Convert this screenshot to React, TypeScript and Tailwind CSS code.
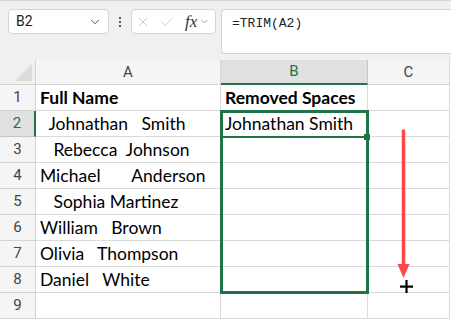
import { ChevronDown, X, Check } from "lucide-react";

const cellFont = { fontFamily: "Lato, 'Open Sans', sans-serif" };

const rows: { a: string; b: string; bold?: boolean }[] = [
  { a: "Full Name", b: "Removed Spaces", bold: true },
  { a: "  Johnathan   Smith", b: "Johnathan Smith" },
  { a: "   Rebecca  Johnson", b: "" },
  { a: "Michael       Anderson", b: "" },
  { a: "   Sophia Martinez", b: "" },
  { a: "William   Brown", b: "" },
  { a: "Olivia   Thompson", b: "" },
  { a: "Daniel   White", b: "" },
  { a: "", b: "" },
];

function FormulaBar() {
  return (
    <div className="relative h-[60px] border-t border-[#d6d6d6] bg-[#f0f0f0] font-['Roboto',sans-serif]">
      <div className="flex items-start gap-0 pt-[8px] pl-[8px]">
        <div className="flex h-[25px] w-[101px] items-center justify-between rounded-[4px] border border-[#d4d4d4] bg-white pl-[7px] pr-[6px] text-[14px] text-[#222]">
          <span>B2</span>
          <ChevronDown className="h-[14px] w-[14px] text-[#444]" strokeWidth={1.6} />
        </div>
        <div className="flex h-[25px] w-[22px] flex-col items-center justify-center gap-[2px]">
          <span className="h-[2px] w-[2px] bg-[#555]" />
          <span className="h-[2px] w-[2px] bg-[#555]" />
          <span className="h-[2px] w-[2px] bg-[#555]" />
        </div>
        <div className="flex h-[25px] w-[85px] items-center rounded-[4px] border border-[#d4d4d4] bg-white pl-[3px]">
          <X className="h-[16px] w-[16px] text-[#bdbdbd]" strokeWidth={1.2} />
          <Check className="ml-[8px] h-[16px] w-[16px] text-[#bdbdbd]" strokeWidth={1.2} />
          <span className="ml-[10px] font-['Liberation_Serif',serif] text-[17px] italic leading-none text-[#333]">
            fx
          </span>
          <ChevronDown className="ml-[2px] h-[11px] w-[11px] text-[#777]" strokeWidth={1.6} />
        </div>
        <div className="ml-[5px] h-[45px] flex-1 rounded-l-[4px] border border-r-0 border-[#d4d4d4] bg-white pl-[10px] pt-[4px] font-['Liberation_Mono',monospace] text-[13px] text-[#222]">
          =TRIM(A2)
        </div>
      </div>
    </div>
  );
}

export default function App() {
  return (
    <div className="h-[321px] w-[451px] overflow-hidden bg-white">
      <FormulaBar />
      <div className="relative">
        <div className="grid grid-cols-[36px_185px_147px_82px] grid-rows-[25px_repeat(10,26px)]">
          {/* header row */}
          <div className="relative border-r border-b border-[#d4d4d4] bg-[#f0f0f0]">
            <svg className="absolute right-[3px] bottom-[3px]" width="17" height="17">
              <polygon points="17,0 17,17 0,17" fill="#dcdcdc" />
            </svg>
          </div>
          <div className="flex items-center justify-center border-r border-b border-[#d4d4d4] bg-[#f5f5f5] font-['Roboto',sans-serif] text-[15px] text-[#444]">
            A
          </div>
          <div className="flex items-center justify-center border-r border-b-2 border-r-[#c6c6c6] border-b-[#217346] bg-[#e0e0e0] font-['Roboto',sans-serif] text-[15px] text-[#217346]">
            B
          </div>
          <div className="flex items-center justify-center border-r border-b border-[#d4d4d4] bg-[#f5f5f5] font-['Roboto',sans-serif] text-[15px] text-[#444]">
            C
          </div>
          {rows.map((r, i) => {
            const active = i === 1;
            return [
              <div
                key={`h${i}`}
                className={
                  active
                    ? "flex items-center justify-center border-r-2 border-b border-r-[#217346] border-b-[#c6c6c6] bg-[#e0e0e0] font-['Roboto',sans-serif] text-[15px] text-[#217346]"
                    : "flex items-center justify-center border-r border-b border-[#d4d4d4] bg-[#f5f5f5] font-['Roboto',sans-serif] text-[15px] text-[#444]"
                }
              >
                {i + 1}
              </div>,
              <div
                key={`a${i}`}
                style={cellFont}
                className={`flex items-center border-r border-b border-[#dadada] pl-[4px] pt-[1px] text-[17.5px] whitespace-pre text-black ${r.bold ? "font-bold" : ""}`}
              >
                {r.a}
              </div>,
              <div
                key={`b${i}`}
                style={cellFont}
                className={`flex items-center border-r border-b border-[#dadada] pl-[4px] pt-[1px] text-[17.5px] whitespace-pre text-black ${r.bold ? "font-bold" : ""}`}
              >
                {r.b}
              </div>,
              <div key={`c${i}`} className="border-r border-b border-[#dadada]" />,
            ];
          })}
        </div>

        {/* selection B2:B8 */}
        <div className="pointer-events-none absolute top-[50px] left-[220px] h-[184px] w-[149px] border-[3px] border-[#217346]" />
        <div className="pointer-events-none absolute top-[76px] left-[220px] h-[2px] w-[146px] bg-[#217346]" />
        <div className="pointer-events-none absolute top-[74px] left-[364px] h-[6px] w-[6px] bg-[#217346]" />

        {/* drag arrow */}
        <svg className="pointer-events-none absolute top-[69px] left-[396px]" width="16" height="150">
          <line x1="7.5" y1="2" x2="7.5" y2="138" stroke="#ff4747" strokeWidth="3.5" strokeLinecap="round" />
          <polygon points="1.5,135 13.5,135 7.5,149" fill="#ff4747" />
        </svg>
        <svg className="pointer-events-none absolute top-[220px] left-[400px]" width="13" height="13">
          <rect x="0" y="5.5" width="13" height="2.2" fill="#000" />
          <rect x="5.4" y="0" width="2.2" height="13" fill="#000" />
        </svg>
      </div>
    </div>
  );
}
